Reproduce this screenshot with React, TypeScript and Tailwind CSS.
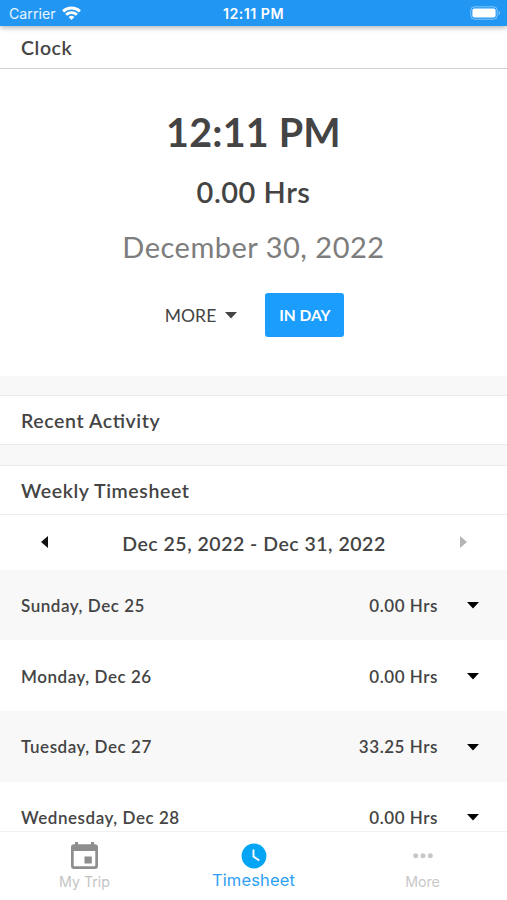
import clsx from 'clsx';

const days = [
  { label: 'Sunday, Dec 25', hours: '0.00 Hrs' },
  { label: 'Monday, Dec 26', hours: '0.00 Hrs' },
  { label: 'Tuesday, Dec 27', hours: '33.25 Hrs' },
  { label: 'Wednesday, Dec 28', hours: '0.00 Hrs' },
];

function CaretDown({ className }: { className?: string }) {
  return (
    <svg viewBox="0 0 12 7" className={clsx('h-[7px] w-3', className)} fill="currentColor">
      <path d="M0 0h12L6 6.6z" />
    </svg>
  );
}

function StatusBar() {
  return (
    <div className="relative z-10 flex h-[25.5px] shrink-0 items-center bg-[#2196f3] pr-[6px] pl-[9px] font-['Inter',sans-serif] text-white shadow-[0_2px_5px_rgba(0,0,0,0.28)]">
      <div className="flex flex-1 items-center gap-[6px] pt-px">
        <span className="pt-px text-[14.2px] leading-none text-white/90">Carrier</span>
        <svg viewBox="0 0 19 14" className="-mt-px h-[14px] w-[19px]" fill="none" stroke="white" strokeWidth="2.9">
          <path d="M1.1 5.4a12.2 12.2 0 0 1 16.8 0" />
          <path d="M4.1 8.7a8 8 0 0 1 10.8 0" />
          <path d="M9.5 14 6.6 11a4.3 4.3 0 0 1 5.8 0z" fill="white" stroke="none" />
        </svg>
      </div>
      <span className="-ml-[3px] pt-[2px] text-[14.2px] leading-none font-semibold tracking-[0.5px]">12:11 PM</span>
      <div className="flex flex-1 items-center justify-end">
        <svg viewBox="0 0 31 14" className="h-[14px] w-[31px]">
          <rect x="0.8" y="0.8" width="26.4" height="12.4" rx="3.6" fill="none" stroke="white" strokeOpacity="0.45" />
          <rect x="2.4" y="2.4" width="23.2" height="9.2" rx="2" fill="white" />
          <path d="M28.6 4.8c1.8.6 1.8 3.8 0 4.4z" fill="white" fillOpacity="0.45" />
        </svg>
      </div>
    </div>
  );
}

function SectionTitle({ title, className }: { title: string; className?: string }) {
  return (
    <div className={clsx('flex shrink-0 items-center bg-white px-[21px] pt-px', className)}>
      <h2 className="text-[19.5px] leading-none font-semibold tracking-[0.6px] [font-feature-settings:'liga'_1]">{title}</h2>
    </div>
  );
}

export default function App() {
  return (
    <div className="flex h-[900px] w-[507px] flex-col overflow-hidden bg-[#f8f8f8] font-['Lato',sans-serif] text-[#444]">
      <StatusBar />
      <SectionTitle title="Clock" className="h-[43.5px] border-b border-[#d2d2d2]" />

      {/* Clock */}
      <div className="flex h-[307px] shrink-0 flex-col items-center bg-white pt-[43px]">
        <div className="text-[39.5px] leading-[40px] font-bold tracking-[0.2px]">12:11 PM</div>
        <div className="mt-[25px] text-[29px] leading-[30px] font-semibold tracking-[0.5px]">0.00 Hrs</div>
        <div className="mt-[25px] text-[29px] leading-[30px] tracking-[0.5px] text-[#7d7d7d]">December 30, 2022</div>
        <div className="mt-[31px] flex items-center pl-0.5">
          <button className="flex items-center gap-[9px] text-[17.5px] tracking-[0.1px]">
            <span className="pt-0.5">MORE</span>
            <CaretDown />
          </button>
          <button className="ml-[28px] h-[44px] w-[79px] rounded-[3px] bg-[#1a9dfc] pt-0.5 text-[15.5px] font-bold text-white">
            IN DAY
          </button>
        </div>
      </div>

      <SectionTitle title="Recent Activity" className="mt-[19px] h-[50px] border-y border-[#ebebeb]" />
      <SectionTitle title="Weekly Timesheet" className="mt-5 h-[50px] border-y border-[#ebebeb]" />

      {/* Week picker */}
      <div className="flex h-[54.6px] shrink-0 items-center justify-between bg-white pr-[40px] pl-[41px]">
        <svg viewBox="0 0 7 12" className="h-3 w-[7px]" fill="#111">
          <path d="M7 0v12L0 6z" />
        </svg>
        <span className="pt-0.5 text-[19.5px] leading-none font-semibold tracking-[0.5px]">Dec 25, 2022 - Dec 31, 2022</span>
        <svg viewBox="0 0 7 12" className="h-3 w-[7px]" fill="#b5b5b5">
          <path d="M0 0v12l7-6z" />
        </svg>
      </div>

      {/* Days */}
      <div className="min-h-0 flex-1 overflow-hidden">
        {days.map((day) => (
          <div
            key={day.label}
            className="flex h-[70.8px] items-center pt-px pr-[28px] pl-[21px] text-[17px] font-semibold tracking-[0.54px] odd:bg-[#f8f8f8] even:bg-white"
          >
            <span className="flex-1">{day.label}</span>
            <span>{day.hours}</span>
            <CaretDown className="ml-[29px] text-black" />
          </div>
        ))}
      </div>

      {/* Tab bar */}
      <nav className="grid h-[69px] shrink-0 grid-cols-3 border-t border-[#f0f0f0] bg-white font-['Inter',sans-serif]">
        <div className="flex flex-col items-center pt-[10px] text-[#c4c4c4]">
          <svg viewBox="0 0 27 27" className="h-[27px] w-[27px]" fill="#8e8e8e">
            <path
              fillRule="evenodd"
              d="M4 0h3v2.3h13V0h3v2.3h1a3 3 0 0 1 3 3V24a3 3 0 0 1-3 3H3a3 3 0 0 1-3-3V5.3a3 3 0 0 1 3-3h1zM2.7 9v14.3a1 1 0 0 0 1 1h19.6a1 1 0 0 0 1-1V9zM13.5 14.5h7.3v7h-7.3z"
            />
          </svg>
          <span className="mt-[6px] text-[14.2px] leading-none">My Trip</span>
        </div>
        <div className="flex flex-col items-center pt-[11px] text-[#2e9ff5]">
          <svg viewBox="0 0 26 26" className="h-[26px] w-[26px]">
            <circle cx="13" cy="13" r="12.4" fill="#03a5f4" />
            <path d="M12.5 6.5v7l5.7 4" fill="none" stroke="white" strokeWidth="1.9" />
          </svg>
          <span className="mt-[3px] text-[16.5px] leading-none tracking-[0.15px]">Timesheet</span>
        </div>
        <div className="flex flex-col items-center pt-[10px] text-[#c8c8c8]">
          <svg viewBox="0 0 20 27" className="h-[27px] w-5" fill="currentColor">
            <circle cx="2.7" cy="13.7" r="2.5" />
            <circle cx="10" cy="13.7" r="2.5" />
            <circle cx="17.3" cy="13.7" r="2.5" />
          </svg>
          <span className="mt-[6px] text-[14.2px] leading-none">More</span>
        </div>
      </nav>
    </div>
  );
}
